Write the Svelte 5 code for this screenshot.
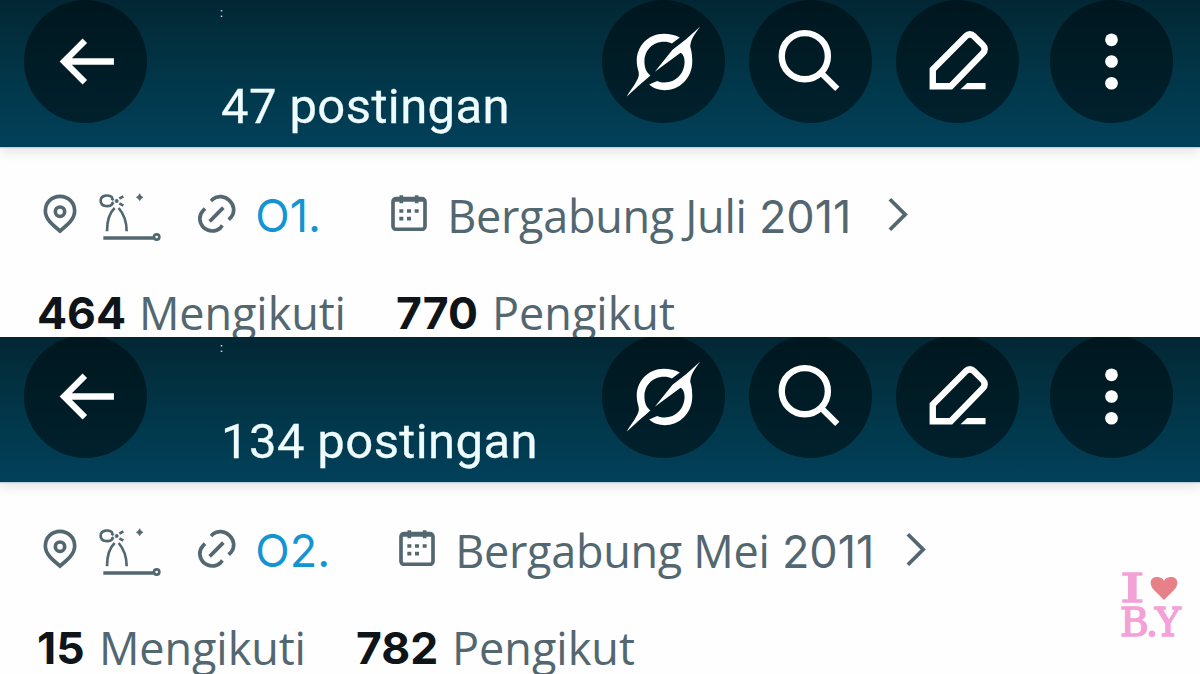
<script>

  let profiles = [
    {
      posts: "47 postingan",
      link: "O1.",
      linkWidth: 135.5,
      joined: "Bergabung Juli",
      joinedWidth: 440,
      year: "2011",
      following: "464",
      followingWidth: 102,
      followers: "770"
    },
    {
      posts: "134 postingan",
      link: "O2.",
      linkWidth: 143.5,
      joined: "Bergabung Mei",
      joinedWidth: 450,
      year: "2011",
      following: "15",
      followingWidth: 62,
      followers: "782"
    }
  ]

</script>

<main>
  {#each profiles as profile}
  <section class="profile">

    <header>
      <div class="round back">
        <svg viewBox="73 0 368 368">
          <path d="M342 184H196M255 122L193 184L255 246" fill="none" stroke="#fff" stroke-width="19" />
        </svg>
      </div>

      <div class="title">
        <span class="name">:</span>
        <span class="posts">{profile.posts}</span>
      </div>

      <div class="round grok">
        <svg viewBox="37 0 368 368">
          <path d="M270 112C255 105 240 101 222 101C175 101 141 138 141 182C141 205 149 214 147 226C143 245 125 265 111 289C125 276 140 262 182 226C168 215 164 200 164 184C164 150 190 125 222 125C232 125 240 127 246 130Z" />
          <path d="M331 79C310 107 302 120 301 140C306 155 307 170 307 184C307 235 268 270 224 270C208 270 190 264 178 253L202 242C210 246 217 247 224 247C258 247 284 220 284 185C284 172 280 162 272 158L195 215L248 149Q290 118 331 79Z" />
        </svg>
      </div>
      <div class="round search">
        <svg viewBox="479 0 368 368">
          <circle cx="646" cy="168" r="69" fill="none" stroke="#fff" stroke-width="19" />
          <path d="M694 217L743 266" stroke="#fff" stroke-width="18" />
        </svg>
      </div>
      <div class="round edit">
        <svg viewBox="49 0 368 368">
          <path d="M159 258V208L257 109Q270 97 283 109L308 134Q321 147 308 160L213 258Z" fill="none" stroke="#fff" stroke-width="19" />
          <path d="M242 267L262 248H317V267Z" />
        </svg>
      </div>
      <div class="round more">
        <svg viewBox="512 0 368 368">
          <circle cx="696" cy="119" r="19" />
          <circle cx="696" cy="184" r="19" />
          <circle cx="696" cy="249" r="19" />
        </svg>
      </div>
    </header>

    <div class="info">
      <svg class="pin" viewBox="68 40 102 120">
        <path d="M119 151C96 132 75 115 75 91C75 65 95 47 119 47C143 47 163 65 163 91C163 115 142 132 119 151Z" />
        <circle cx="119" cy="93" r="14" />
      </svg>
      <svg class="bow" viewBox="236 40 186 144">
        <path class="thin" d="M277 55C269 44 241 44 241 63C241 83 269 83 277 72M273 56L280 61M273 73L280 68M297 57L309 50M297 71L309 78M283 85C269 98 260 125 260 155M295 85C308 100 319 125 319 155" />
        <circle class="dot" cx="289" cy="64" r="5" />
        <path class="dot" d="M358 42Q361 51 368 53Q361 56 358 63Q355 56 348 53Q355 51 358 42Z" />
        <path d="M249 175H400" />
        <circle class="thin" cx="409" cy="172" r="8" />
      </svg>
      <svg class="chain" viewBox="532 40 120 120">
        <path d="M570 122L611 81" />
        <path d="M574 61L580 55C594 44 615 46 629 59C645 74 646 96 634 110L627 117" />
        <path d="M556 84L550 90C536 105 538 126 552 141C567 154 588 154 602 142L608 134" />
      </svg>
      <span class="link" style="width: {profile.linkWidth}px">{profile.link}</span>
      <svg class="calendar" viewBox="62 47 108 108">
        <rect x="68" y="58" width="96" height="92" rx="9" />
        <path d="M68 62H164M93 48V72M139 48V72" />
        <path d="M87 95H99M110 95H122M133 95H145M87 118H99M110 118H122" />
      </svg>
      <span class="joined" style="width: {profile.joinedWidth}px">{profile.joined} <span class="year">{profile.year}</span></span>
      <svg class="chevron" viewBox="0 0 22 36">
        <path d="M3 2L19 18L3 34" />
      </svg>
    </div>

    <div class="counts">
      <b style="width: {profile.followingWidth}px">{profile.following}</b>
      <span class="following">Mengikuti</span>
      <b class="followers">{profile.followers}</b>
      <span class="label">Pengikut</span>
    </div>

  </section>
  {/each}

  <div class="sticker">
    <div class="line">
      <span class="wide">I</span>
      <svg viewBox="0 0 28 25">
        <path d="M14 24L3 13C-1 8 0 1 7 1C10 1 13 2 14 5C15 2 18 1 21 1C28 1 29 8 25 13Z" />
      </svg>
    </div>
    <div class="line">B.Y</div>
  </div>
</main>

<style>

  :global(body) {
    margin: 0;
    background: #fefefe;
  }

  main {
    position: relative;
    width: 1200px;
    height: 674px;
    overflow: hidden;
    font-family: "Open Sans", sans-serif;
  }

  .profile {
    height: 337px;
    overflow: hidden;
    background: #fefefe;
  }

  /* the second capture starts two pixels lower in its own header */
  .profile + .profile header {
    margin-top: -2px;
  }

  header {
    display: flex;
    height: 147px;
    background: linear-gradient(#022634, #02303f 30%, #01394d 65%, #02405a);
    box-shadow: 0 1px 1px #b9d3dc, 0 3px 12px rgba(60, 40, 40, 0.16);
  }

  .round {
    flex: none;
    width: 123px;
    height: 123px;
    border-radius: 50%;
    background: rgba(0, 10, 14, 0.56);
  }

  .round svg {
    display: block;
    width: 100%;
    height: 100%;
    fill: #fff;
  }

  .back {
    margin-left: 24px;
  }

  .title {
    display: flex;
    flex-direction: column;
    width: 381px;
    margin-left: 74px;
    color: #effcff;
    font-family: Roboto, sans-serif;
    white-space: nowrap;
  }

  .name {
    height: 77px;
    padding-top: 5px;
    box-sizing: border-box;
    font-size: 12px;
    line-height: 16px;
    margin-left: -1px;
  }

  .posts {
    font-size: 49px;
    line-height: 60px;
    letter-spacing: 0.4px;
    -webkit-text-stroke: 0.3px #effcff;
  }

  .search, .edit {
    margin-left: 24px;
  }

  .more {
    margin-left: 31px;
  }

  .info {
    display: flex;
    align-items: flex-start;
    height: 70px;
    padding: 46px 0 0 42.7px;
    color: #536771;
    font-size: 45px;
    line-height: 46px;
    white-space: nowrap;
  }

  .info svg {
    flex: none;
    fill: none;
    stroke: #536771;
    stroke-width: 11;
  }

  .info svg .dot {
    fill: #536771;
    stroke-width: 2;
  }

  .info svg .thin {
    stroke-width: 8;
  }

  .info .pin {
    width: 34px;
    height: 40px;
    margin-top: 0.5px;
  }

  .info .bow {
    width: 62px;
    height: 48px;
    margin-left: 22px;
    stroke-width: 10;
  }

  .info .chain {
    width: 40px;
    height: 40px;
    margin-left: 36.6px;
    margin-top: 0.5px;
  }

  .link {
    margin-left: 18px;
    color: #1495d3;
    font-family: Inter, sans-serif;
    font-size: 45px;
  }

  .info .calendar {
    width: 36px;
    height: 36px;
    margin-top: 2px;
  }

  .joined {
    margin-left: 20.5px;
    letter-spacing: -0.3px;
  }

  .year {
    margin-left: 1px;
    font-family: Inter, sans-serif;
    font-size: 45px;
    letter-spacing: 0;
  }

  .info .chevron {
    width: 21px;
    height: 35px;
    margin-top: 3.5px;
    stroke-width: 4;
  }

  .counts {
    display: flex;
    padding: 20px 0 0 37px;
    color: #536771;
    font-size: 45px;
    line-height: 60px;
    white-space: nowrap;
  }

  b {
    color: #0f1419;
    font-family: Inter, sans-serif;
    font-size: 44.5px;
  }

  .following {
    width: 257px;
    letter-spacing: -0.1px;
  }

  .followers {
    width: 96px;
  }

  .sticker {
    position: absolute;
    left: 1120px;
    top: 571px;
    color: #f3a1d6;
    font-family: "DejaVu Serif", serif;
    font-size: 39px;
    line-height: 35px;
    letter-spacing: -3px;
    -webkit-text-stroke: 1.5px #f3a1d6;
  }

  .line {
    display: flex;
    height: 34px;
  }

  .wide {
    width: 15px;
    margin-right: 15px;
    transform: scaleX(1.6);
    transform-origin: 0 0;
  }

  .sticker svg {
    width: 28px;
    height: 25px;
    margin-top: 5px;
    fill: #e8808a;
  }

</style>
